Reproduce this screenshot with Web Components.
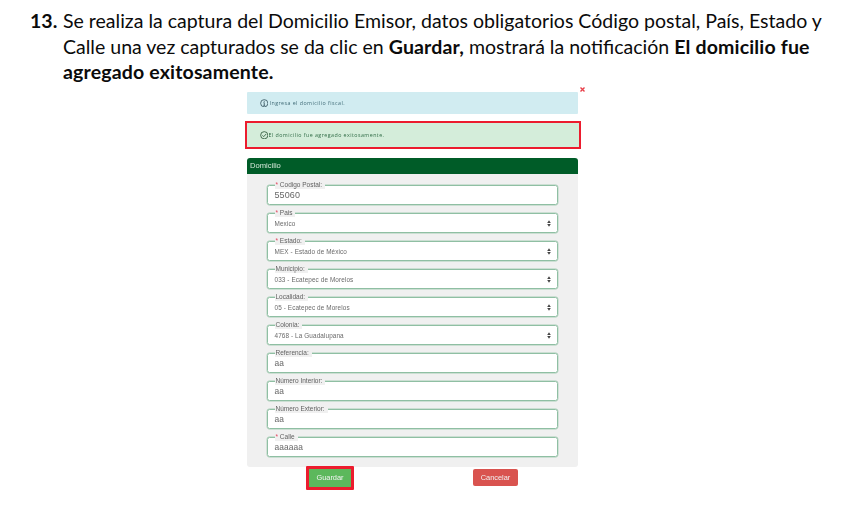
<!DOCTYPE html>
<html lang="es"><head><meta charset="utf-8"><title>Domicilio</title>
<style>
html,body{margin:0;padding:0;background:#fff}
body{width:853px;height:506px;overflow:hidden;font-family:"Liberation Sans",Arial,sans-serif}
</style></head><body>
<doc-step number="13.">Se realiza la captura del Domicilio Emisor, datos obligatorios Código postal, País, Estado y<br>Calle una vez capturados se da clic en <b>Guardar,</b> mostrará la notificación <b>El domicilio fue<br>agregado exitosamente.</b></doc-step>
<address-shot>
  <info-alert kind="info">Ingresa el domicilio fiscal.</info-alert>
  <info-alert kind="success">El domicilio fue agregado exitosamente.</info-alert>
  <form-panel heading="Domicilio">
    <form-field label="Codigo Postal:" required value="55060" big></form-field>
    <form-field label="Pais" required value="Mexico" select></form-field>
    <form-field label="Estado:" required value="MEX - Estado de México" select></form-field>
    <form-field label="Municipio:" value="033 - Ecatepec de Morelos" select></form-field>
    <form-field label="Localidad:" value="05 - Ecatepec de Morelos" select></form-field>
    <form-field label="Colonia:" value="4768 - La Guadalupana" select></form-field>
    <form-field label="Referencia:" value="aa"></form-field>
    <form-field label="Número Interior:" value="aa"></form-field>
    <form-field label="Número Exterior:" value="aa"></form-field>
    <form-field label="Calle" required value="aaaaaa"></form-field>
  </form-panel>
  <action-row></action-row>
</address-shot>
<script>
function def(name, css, html, init){
  customElements.define(name, class extends HTMLElement{
    constructor(){super();const s=this.attachShadow({mode:'open'});s.innerHTML='<style>'+css+'</style>'+(typeof html==='function'?html(this):html);}
    connectedCallback(){ if(init) init(this,this.shadowRoot); }
  });
}
def('doc-step',`
:host{display:flex;padding:8px 0 0 30px;font:19.55px/25.5px Lato,"Open Sans",sans-serif;color:#0b0b0b;height:78px}
.n{width:33px;font-weight:700;flex:none}
.t{white-space:nowrap}
::slotted(b){letter-spacing:.15px}
`,`<div class="n"></div><div class="t"><slot></slot></div>`,(e,s)=>{s.querySelector('.n').textContent=e.getAttribute('number')});

def('address-shot',`
:host{display:block;position:relative;width:331px;margin:6px 0 0 247px;filter:blur(.55px);font-family:"Liberation Sans",Arial,sans-serif}
.x{position:absolute;left:332px;top:-6px;width:7px;height:7px}
`,`<svg class="x" viewBox="0 0 7 7"><path d="M1.5 1.5l4 4M5.5 1.5l-4 4" stroke="#e8404a" stroke-width="1.4" fill="none"/></svg><slot></slot>`);

const ICONS={
 info:`<svg width="8.5" height="8.5" viewBox="0 0 8 8"><circle cx="4" cy="4" r="3.4" fill="none" stroke="#3c5a64" stroke-width=".8"/><path d="M4 3.4v2.6M3.2 6h1.6M3.3 3.4H4" stroke="#3c5a64" stroke-width=".8" fill="none"/><circle cx="4" cy="2.2" r=".5" fill="#3c5a64"/></svg>`,
 success:`<svg width="8.5" height="8.5" viewBox="0 0 8 8"><circle cx="4" cy="4" r="3.4" fill="none" stroke="#2f5a3c" stroke-width=".8"/><path d="M2.3 4.1l1.2 1.2 2.3-2.5" stroke="#2f5a3c" stroke-width=".8" fill="none"/></svg>`};
def('info-alert',`
:host{display:flex;align-items:center;box-sizing:border-box;font:5.3px/8px "Open Sans",sans-serif;letter-spacing:.45px}
:host([kind=info]){height:22px;background:#d1ecf1;color:#3f6a76;padding-left:12.5px;border-radius:1px;gap:1.5px}
:host([kind=success]){height:28px;margin:7px -3px 9px -2px;background:#d4edda;color:#2f6b45;border:2px solid #ec1c2e;padding-left:12.5px;gap:.5px}
svg{display:block;flex:none}
`,e=>ICONS[e.getAttribute('kind')]+'<slot></slot>');

def('form-panel',`
:host{display:block}
.h{height:16px;background:#005c28;color:#d5e8da;font-size:7.6px;line-height:16px;padding-left:3px;border-radius:3px 3px 0 0}
.b{background:#f0f0f0;padding:7px 20px 10px;display:grid;gap:4px;border-radius:0 0 3px 3px}
`,e=>`<div class="h">${e.getAttribute('heading')}</div><div class="b"><slot></slot></div>`);

def('form-field',`
:host{display:block}
fieldset{box-sizing:border-box;height:24px;margin:0;padding:0 6px 0 6.5px;background:#fff;border:1px solid #8fbfa3;border-radius:2.5px;box-shadow:0 0 0 .4px #a8cdb6;display:flex;align-items:center;justify-content:space-between;position:relative;background-clip:padding-box}
legend{padding:0 3px 0 1px;margin-left:0;font-size:6.5px;line-height:8px;color:#5f5f5f;white-space:nowrap;background:#f0f0f0}
i{font-style:normal;color:#e2445c}
.v{color:#666;font-size:8.4px;line-height:15px;height:15px;letter-spacing:.1px;margin-top:-3px}
:host([big]) .v{font-size:9px}
:host([select]) .v{font-size:6.4px;letter-spacing:.1px;color:#6a6a6a}
svg{flex:none;display:block;margin-top:-3px}
`,e=>{
 const r=e.hasAttribute('required')?'<i>*</i> ':'';
 const sel=e.hasAttribute('select')?`<svg width="4" height="7" viewBox="0 0 4 7"><path d="M2 .3L3.8 2.9H.2zM2 6.7L3.8 4.1H.2z" fill="#444"/></svg>`:'';
 return `<fieldset><legend>${r}${e.getAttribute('label')}</legend><span class="v">${e.getAttribute('value')}</span>${sel}</fieldset>`;
});

def('action-row',`
:host{display:flex;align-items:flex-start;margin-top:-1px;padding-left:59px;gap:119px;font-size:7.4px;color:#f2f2f2}
.g{box-sizing:border-box;width:48px;height:24px;border:3px solid #ec1c2e;background:#5cb85c;text-align:center;line-height:18px;border-radius:1px}
.c{margin-top:3px;width:45px;height:17px;background:#d9534f;text-align:center;line-height:17px;border-radius:2px}
`,`<div class="g">Guardar</div><div class="c">Cancelar</div>`);
</script>
</body></html>
